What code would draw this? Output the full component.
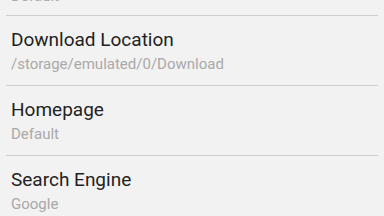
const items = [
  { title: "User Agent", value: "Default" },
  { title: "Download Location", value: "/storage/emulated/0/Download" },
  { title: "Homepage", value: "Default" },
  { title: "Search Engine", value: "Google" },
]

export default function App() {
  return (
    <div className="h-[216px] w-[384px] overflow-hidden bg-[#f2f2f2] font-['Roboto',sans-serif]">
      <div className="-mt-[52px]">
        {items.map((item, i) => (
          <div key={item.title}>
            <div className={`pl-[11px] pt-[12px] ${i === 0 ? "pb-[9px]" : "pb-[11px]"}`}>
              <div className="text-[19px] leading-[24px] text-[#222222]">{item.title}</div>
              <div className="mt-[2px] text-[15px] leading-[20px] text-[#a9a9a9]">{item.value}</div>
            </div>
            <div className="mx-[6px] h-px bg-[#cfcfcf]" />
          </div>
        ))}
      </div>
    </div>
  )
}
